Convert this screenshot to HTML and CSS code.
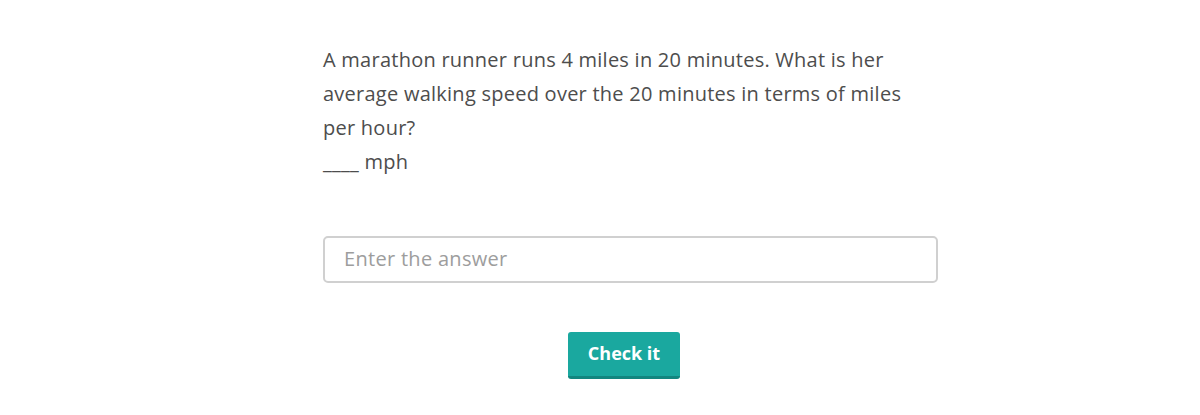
FILE: index.html
```html
<!DOCTYPE html>
<html>
<head>
<meta charset="utf-8">
<link rel="stylesheet" href="styles.css">
</head>
<body>
<main class="question">
  <p class="prompt">A marathon runner runs 4 miles in 20 minutes. What is her average walking speed over the 20 minutes in terms of miles per hour?</p>
  <p class="blank">____ mph</p>
  <div class="answer">
    <input class="answer-input" type="text" placeholder="Enter the answer">
  </div>
  <div class="actions">
    <button class="check-btn" type="button">Check it</button>
  </div>
</main>
</body>
</html>
```

FILE: styles.css
```css
html, body {
  margin: 0;
  padding: 0;
  background: #ffffff;
}
body {
  font-family: "Open Sans", "Liberation Sans", sans-serif;
  color: #4d4d4d;
}
.question {
  width: 615px;
  margin-left: 323px;
  padding-top: 43px;
}
.prompt, .blank {
  margin: 0;
  font-size: 20px;
  letter-spacing: 0.25px;
  line-height: 34px;
  width: 600px;
}
.answer {
  margin-top: 57px;
}
.answer-input {
  box-sizing: border-box;
  width: 615px;
  height: 47px;
  border: 2px solid #d0d0d0;
  border-radius: 5px;
  padding: 0 0 3px 19px;
  font-family: inherit;
  font-size: 20px;
  letter-spacing: 0.3px;
  color: #4d4d4d;
  outline: none;
}
.answer-input::placeholder {
  color: #9d9d9d;
}
.actions {
  display: flex;
  justify-content: center;
  padding-right: 13px;
  margin-top: 49px;
}
.check-btn {
  box-sizing: border-box;
  width: 112px;
  height: 47px;
  background: #1aa89f;
  border: none;
  border-bottom: 3px solid #12867f;
  border-radius: 3px;
  color: #ffffff;
  font-family: inherit;
  font-weight: 700;
  font-size: 18px;
  padding: 0 0 3px 0;
}
```
